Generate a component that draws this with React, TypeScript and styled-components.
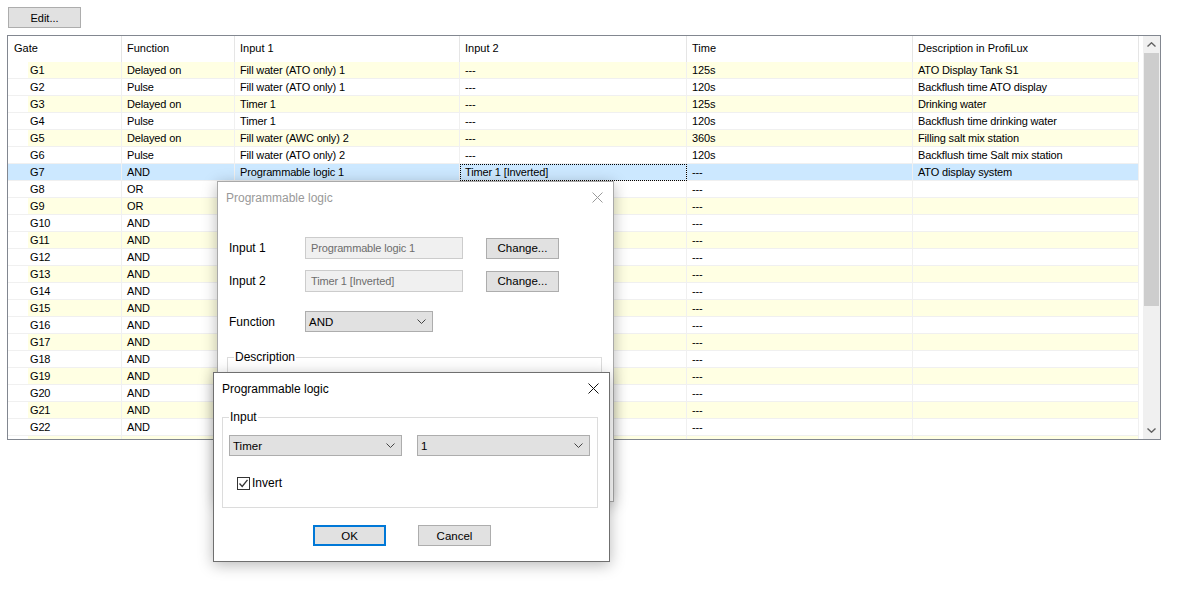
import styled, { createGlobalStyle } from 'styled-components';

interface GateRow {
  gate: string;
  fn: string;
  input1: string;
  input2: string;
  time: string;
  desc: string;
}

const rows: GateRow[] = [
  { gate: 'G1', fn: 'Delayed on', input1: 'Fill water (ATO only) 1', input2: '---', time: '125s', desc: 'ATO Display Tank S1' },
  { gate: 'G2', fn: 'Pulse', input1: 'Fill water (ATO only) 1', input2: '---', time: '120s', desc: 'Backflush time ATO display' },
  { gate: 'G3', fn: 'Delayed on', input1: 'Timer 1', input2: '---', time: '125s', desc: 'Drinking water' },
  { gate: 'G4', fn: 'Pulse', input1: 'Timer 1', input2: '---', time: '120s', desc: 'Backflush time drinking water' },
  { gate: 'G5', fn: 'Delayed on', input1: 'Fill water (AWC only) 2', input2: '---', time: '360s', desc: 'Filling salt mix station' },
  { gate: 'G6', fn: 'Pulse', input1: 'Fill water (ATO only) 2', input2: '---', time: '120s', desc: 'Backflush time Salt mix station' },
  { gate: 'G7', fn: 'AND', input1: 'Programmable logic 1', input2: 'Timer 1 [Inverted]', time: '---', desc: 'ATO display system' },
  { gate: 'G8', fn: 'OR', input1: '---', input2: '---', time: '---', desc: '' },
  { gate: 'G9', fn: 'OR', input1: '---', input2: '---', time: '---', desc: '' },
  ...Array.from({ length: 14 }, (_, i) => ({
    gate: `G${i + 10}`,
    fn: 'AND',
    input1: '---',
    input2: '---',
    time: '---',
    desc: '',
  })),
];

const SELECTED = 6;
const COLS = '114px 113px 225px 227px 226px 226px';
const YELLOW = '#ffffe3';
const BLUE = '#cce8ff';

const GlobalStyle = createGlobalStyle`
  html, body {
    margin: 0;
    padding: 0;
    background: #fff;
  }
  body {
    font-family: "Liberation Sans", Arial, sans-serif;
    font-size: 11px;
    color: #000;
  }
`;

const Page = styled.div`
  position: relative;
  width: 1187px;
  height: 592px;
  overflow: hidden;
  box-sizing: border-box;
  padding: 7px 0 0 7px;
  display: flex;
  flex-direction: column;
  gap: 7px;
`;

const Button = styled.button<{ $w?: number; $default?: boolean }>`
  box-sizing: border-box;
  width: ${(p) => p.$w ?? 73}px;
  height: 21px;
  padding: 0;
  background: #e1e1e1;
  border: ${(p) => (p.$default ? '2px solid #0078d7' : '1px solid #adadad')};
  font-family: "Liberation Sans", Arial, sans-serif;
  font-size: 11.5px;
  color: #000;
`;

const EditButton = styled(Button)`
  margin-left: 1px;
  font-size: 11px;
`;

const ListBox = styled.div`
  box-sizing: border-box;
  width: 1154px;
  height: 405px;
  border: 1px solid #828790;
  display: flex;
`;

const ListBody = styled.div`
  flex: 1;
  overflow: hidden;
`;

const HeaderRow = styled.div`
  display: grid;
  grid-template-columns: ${COLS};
  height: 26px;
`;

const HeaderCell = styled.div`
  box-sizing: border-box;
  padding-left: 5px;
  line-height: 25px;
  border-right: 1px solid #e5e5e5;
  white-space: nowrap;
  &:first-child {
    padding-left: 6px;
  }
`;

const Row = styled.div`
  display: grid;
  grid-template-columns: ${COLS};
  height: 17px;
`;

const Cell = styled.div<{ $bg: string; $gate?: boolean; $focus?: boolean }>`
  box-sizing: border-box;
  height: 17px;
  line-height: 16px;
  padding-left: ${(p) => (p.$gate ? 22 : 5)}px;
  border-right: 1px solid #f0f0f0;
  border-bottom: 1px solid #f0f0f0;
  background: ${(p) => p.$bg};
  white-space: nowrap;
  overflow: hidden;
  letter-spacing: -0.15px;
  ${(p) => p.$focus && 'outline: 1px dotted #000; outline-offset: -1px;'}
`;

const ScrollBar = styled.div`
  width: 17px;
  background: #f0f0f0;
  display: flex;
  flex-direction: column;
`;

const ScrollArrow = styled.div`
  height: 17px;
  display: flex;
  align-items: center;
  justify-content: center;
`;

const Thumb = styled.div`
  height: 253px;
  margin: 0 1px;
  background: #cdcdcd;
`;

const Track = styled.div`
  flex: 1;
`;

const Dialog = styled.div<{ $left: number; $top: number; $h: number; $active?: boolean }>`
  position: absolute;
  left: ${(p) => p.$left}px;
  top: ${(p) => p.$top}px;
  width: 397px;
  height: ${(p) => p.$h}px;
  box-sizing: border-box;
  background: #fff;
  border: 1px solid ${(p) => (p.$active ? '#6f6f6f' : '#a9a9a9')};
  box-shadow: 0 3px 14px rgba(0, 0, 0, 0.28);
  display: flex;
  flex-direction: column;
  font-size: 12px;
`;

const TitleBar = styled.div<{ $active?: boolean }>`
  height: 31px;
  flex: none;
  display: flex;
  align-items: center;
  justify-content: space-between;
  padding-left: 8px;
  color: ${(p) => (p.$active ? '#000' : '#999')};
  font-size: 12px;
`;

const CloseBox = styled.div`
  width: 32px;
  height: 31px;
  display: flex;
  align-items: center;
  justify-content: center;
`;

const FormGrid = styled.div`
  display: grid;
  grid-template-columns: 76px 181px 73px;
  row-gap: 11px;
  align-items: center;
  margin: 24px 0 0 11px;
`;

const Label = styled.div`
  font-size: 12px;
`;

const ReadField = styled.div`
  box-sizing: border-box;
  width: 158px;
  height: 22px;
  line-height: 20px;
  padding-left: 5px;
  background: #f0f0f0;
  border: 1px solid #cccccc;
  color: #6d6d6d;
  font-size: 11px;
  letter-spacing: -0.15px;
  white-space: nowrap;
`;

const FunctionRow = styled.div`
  display: grid;
  grid-template-columns: 76px 128px;
  align-items: center;
  margin: 19px 0 0 11px;
`;

const Select = styled.div<{ $w: number }>`
  box-sizing: border-box;
  width: ${(p) => p.$w}px;
  height: 21px;
  background: #e1e1e1;
  border: 1px solid #adadad;
  display: flex;
  align-items: center;
  justify-content: space-between;
  padding: 0 6px 0 3px;
  font-size: 11.5px;
`;

const GroupBox = styled.fieldset<{ $w: number; $h: number }>`
  box-sizing: border-box;
  width: ${(p) => p.$w}px;
  height: ${(p) => p.$h}px;
  margin: 0;
  padding: 0;
  border: 1px solid #dcdcdc;
  font-size: 12px;
`;

const Legend = styled.legend<{ $inset: number }>`
  margin-left: ${(p) => p.$inset}px;
  padding: 0 1px;
`;

const DescGroup = styled(GroupBox)`
  margin: 18px 0 0 9px;
`;

const InputGroup = styled(GroupBox)`
  margin: 6px 0 0 8px;
  padding: 11px 0 0 6px;
`;

const SelectRow = styled.div`
  display: flex;
  gap: 15px;
`;

const CheckRow = styled.label`
  display: flex;
  align-items: center;
  gap: 2px;
  margin: 20px 0 0 8px;
  font-size: 12px;
`;

const CheckBox = styled.span`
  box-sizing: border-box;
  width: 13px;
  height: 13px;
  border: 1px solid #333;
  background: #fff;
  display: flex;
  align-items: center;
  justify-content: center;
`;

const ButtonRow = styled.div`
  display: flex;
  gap: 32px;
  margin: 17px 0 0 99px;
`;

const Chevron = ({ up, color = '#505050' }: { up?: boolean; color?: string }) => (
  <svg width="9" height="5" viewBox="0 0 9 5">
    <path
      d={up ? 'M0.5 4.5 L4.5 0.8 L8.5 4.5' : 'M0.5 0.5 L4.5 4.2 L8.5 0.5'}
      fill="none"
      stroke={color}
      strokeWidth="1.4"
    />
  </svg>
);

const DropArrow = () => (
  <svg width="9" height="5" viewBox="0 0 9 5">
    <path d="M0.5 0.5 L4.5 4.5 L8.5 0.5" fill="none" stroke="#444" strokeWidth="1" />
  </svg>
);

const CloseIcon = ({ color }: { color: string }) => (
  <svg width="11" height="11" viewBox="0 0 11 11">
    <path d="M0.5 0.5 L10.5 10.5 M10.5 0.5 L0.5 10.5" stroke={color} strokeWidth="1" />
  </svg>
);

const rowBg = (index: number) => {
  if (index === SELECTED) return BLUE;
  return index % 2 === 0 ? YELLOW : '#fff';
};

const gateBg = (index: number) => {
  if (index === SELECTED) return BLUE;
  return `linear-gradient(to right, #fff 20px, ${rowBg(index)} 20px)`;
};

const App = () => (
  <>
    <GlobalStyle />
    <Page>
      <EditButton>Edit...</EditButton>

      <ListBox>
        <ListBody>
          <HeaderRow>
            <HeaderCell>Gate</HeaderCell>
            <HeaderCell>Function</HeaderCell>
            <HeaderCell>Input 1</HeaderCell>
            <HeaderCell>Input 2</HeaderCell>
            <HeaderCell>Time</HeaderCell>
            <HeaderCell>Description in ProfiLux</HeaderCell>
          </HeaderRow>
          {rows.map((row, index) => (
            <Row key={row.gate}>
              <Cell $gate $bg={gateBg(index)}>{row.gate}</Cell>
              <Cell $bg={rowBg(index)}>{row.fn}</Cell>
              <Cell $bg={rowBg(index)}>{row.input1}</Cell>
              <Cell $bg={rowBg(index)} $focus={index === SELECTED}>{row.input2}</Cell>
              <Cell $bg={rowBg(index)}>{row.time}</Cell>
              <Cell $bg={rowBg(index)}>{row.desc}</Cell>
            </Row>
          ))}
        </ListBody>
        <ScrollBar>
          <ScrollArrow>
            <Chevron up color="#606060" />
          </ScrollArrow>
          <Thumb />
          <Track />
          <ScrollArrow>
            <Chevron color="#606060" />
          </ScrollArrow>
        </ScrollBar>
      </ListBox>

      {/* edit dialog, inactive behind the input picker */}
      <Dialog $left={217} $top={181} $h={321}>
        <TitleBar>
          <span>Programmable logic</span>
          <CloseBox>
            <CloseIcon color="#9a9a9a" />
          </CloseBox>
        </TitleBar>
        <FormGrid>
          <Label>Input 1</Label>
          <ReadField>Programmable logic 1</ReadField>
          <Button>Change...</Button>
          <Label>Input 2</Label>
          <ReadField>Timer 1 [Inverted]</ReadField>
          <Button>Change...</Button>
        </FormGrid>
        <FunctionRow>
          <Label>Function</Label>
          <Select $w={128}>
            <span>AND</span>
            <DropArrow />
          </Select>
        </FunctionRow>
        <DescGroup $w={375} $h={130}>
          <Legend $inset={6}>Description</Legend>
        </DescGroup>
      </Dialog>

      <Dialog $left={213} $top={372} $h={190} $active>
        <TitleBar $active>
          <span>Programmable logic</span>
          <CloseBox>
            <CloseIcon color="#111" />
          </CloseBox>
        </TitleBar>
        <InputGroup $w={376} $h={98}>
          <Legend $inset={0}>Input</Legend>
          <SelectRow>
            <Select $w={173}>
              <span>Timer</span>
              <DropArrow />
            </Select>
            <Select $w={173}>
              <span>1</span>
              <DropArrow />
            </Select>
          </SelectRow>
          <CheckRow>
            <CheckBox>
              <svg width="11" height="11" viewBox="0 0 11 11">
                <path d="M1.5 5.5 L4.2 8.5 L9.5 1.8" fill="none" stroke="#333" strokeWidth="1.3" />
              </svg>
            </CheckBox>
            Invert
          </CheckRow>
        </InputGroup>
        <ButtonRow>
          <Button $w={73} $default>OK</Button>
          <Button>Cancel</Button>
        </ButtonRow>
      </Dialog>
    </Page>
  </>
);

export default App;
